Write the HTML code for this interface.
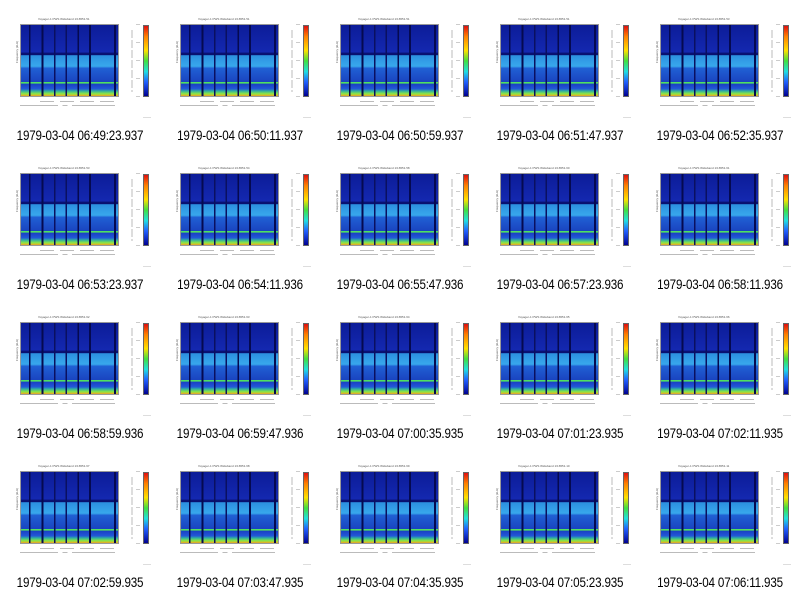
<!DOCTYPE html>
<html><head><meta charset="utf-8"><style>
*{margin:0;padding:0;box-sizing:border-box}
body{width:800px;height:596px;background:#fff;position:relative;overflow:hidden;font-family:"Liberation Sans",sans-serif}
.c{position:absolute;width:160px;height:149px}
.t{position:absolute;left:38px;top:17px;font-size:3px;color:#555;white-space:nowrap}
.p{position:absolute;left:20px;top:24px;width:99px;height:73px;
background:
linear-gradient(to right,transparent 8%,#050a50 8%,#050a50 10%,transparent 10%,transparent 21%,#050a50 21%,#050a50 23%,transparent 23%,transparent 34%,#0a1060 34%,#0a1060 35.5%,transparent 35.5%,transparent 46%,#0a1060 46%,#0a1060 47.5%,transparent 47.5%,transparent 58%,#050a50 58%,#050a50 60%,transparent 60%,transparent 70%,#050a50 70%,#050a50 72%,transparent 72%,transparent 96%,#050a50 96%,#050a50 98%,transparent 98%),
linear-gradient(to bottom,#0c1c98 0%,#1428b0 38%,#081070 40%,#081070 42%,#2c90e0 43%,#38a8ec 58%,#2060d4 61%,#1a44c0 80%,#50e060 80.5%,#50e060 82%,#1a40c4 83%,#2258d8 90%,#30b0a0 93%,#90e840 97%,#f0a020 100%);
border:1px solid #999}
.y{position:absolute;left:6px;top:50px;font-size:3px;color:#555;transform:rotate(-90deg)}
.x{position:absolute;left:20px;top:99px;width:99px;height:10px}
.x:before{content:"";position:absolute;left:20px;top:2px;width:75px;height:1px;background:repeating-linear-gradient(to right,#bbb 0 14px,transparent 14px 20px)}
.x:after{content:"";position:absolute;left:0;top:6px;width:95px;height:1px;background:linear-gradient(to right,#bbb 0 40%,transparent 40% 45%,#bbb 45% 50%,transparent 50% 55%,#bbb 55% 100%)}
.cb{position:absolute;left:143px;top:25px;width:6px;height:72px;border:1px solid #666;
background:linear-gradient(to bottom,#e01010,#ff8000 15%,#ffe000 35%,#40e040 50%,#20e0e0 65%,#2060ff 80%,#000090)}
.cbl{position:absolute;left:131px;top:30px;width:2px;height:62px;background:repeating-linear-gradient(to bottom,#ddd 0 8px,transparent 8px 10px)}
.k{position:absolute;left:136px;top:24px;width:4px;height:75px;background:repeating-linear-gradient(to bottom,#ccc 0 1px,transparent 1px 18px)}
.sm{position:absolute;left:143px;top:117px;width:8px;height:1px;background:#ddd}
.l{position:absolute;left:0;width:160px;top:127px;text-align:center;font-size:14px;color:#000;transform:scaleX(0.83);letter-spacing:-0.2px}
</style></head><body>
<div class="c" style="left:0;top:0"><div class="t">Voyager-1 PWS Wideband 1/16551.51</div><div class="y">Frequency (kHz)</div><div class="p"></div><div class="x"></div><div class="cbl"></div><div class="k"></div><div class="cb"></div><div class="sm"></div><div class="l">1979-03-04 06:49:23.937</div></div>
<div class="c" style="left:160px;top:0"><div class="t">Voyager-1 PWS Wideband 1/16551.51</div><div class="y">Frequency (kHz)</div><div class="p"></div><div class="x"></div><div class="cbl"></div><div class="k"></div><div class="cb"></div><div class="sm"></div><div class="l">1979-03-04 06:50:11.937</div></div>
<div class="c" style="left:320px;top:0"><div class="t">Voyager-1 PWS Wideband 1/16551.51</div><div class="y">Frequency (kHz)</div><div class="p"></div><div class="x"></div><div class="cbl"></div><div class="k"></div><div class="cb"></div><div class="sm"></div><div class="l">1979-03-04 06:50:59.937</div></div>
<div class="c" style="left:480px;top:0"><div class="t">Voyager-1 PWS Wideband 1/16551.51</div><div class="y">Frequency (kHz)</div><div class="p"></div><div class="x"></div><div class="cbl"></div><div class="k"></div><div class="cb"></div><div class="sm"></div><div class="l">1979-03-04 06:51:47.937</div></div>
<div class="c" style="left:640px;top:0"><div class="t">Voyager-1 PWS Wideband 1/16551.53</div><div class="y">Frequency (kHz)</div><div class="p"></div><div class="x"></div><div class="cbl"></div><div class="k"></div><div class="cb"></div><div class="sm"></div><div class="l">1979-03-04 06:52:35.937</div></div>

<div class="c" style="left:0;top:149px"><div class="t">Voyager-1 PWS Wideband 1/16551.53</div><div class="y">Frequency (kHz)</div><div class="p"></div><div class="x"></div><div class="cbl"></div><div class="k"></div><div class="cb"></div><div class="sm"></div><div class="l">1979-03-04 06:53:23.937</div></div>
<div class="c" style="left:160px;top:149px"><div class="t">Voyager-1 PWS Wideband 1/16551.54</div><div class="y">Frequency (kHz)</div><div class="p"></div><div class="x"></div><div class="cbl"></div><div class="k"></div><div class="cb"></div><div class="sm"></div><div class="l">1979-03-04 06:54:11.936</div></div>
<div class="c" style="left:320px;top:149px"><div class="t">Voyager-1 PWS Wideband 1/16551.58</div><div class="y">Frequency (kHz)</div><div class="p"></div><div class="x"></div><div class="cbl"></div><div class="k"></div><div class="cb"></div><div class="sm"></div><div class="l">1979-03-04 06:55:47.936</div></div>
<div class="c" style="left:480px;top:149px"><div class="t">Voyager-1 PWS Wideband 1/16551.60</div><div class="y">Frequency (kHz)</div><div class="p"></div><div class="x"></div><div class="cbl"></div><div class="k"></div><div class="cb"></div><div class="sm"></div><div class="l">1979-03-04 06:57:23.936</div></div>
<div class="c" style="left:640px;top:149px"><div class="t">Voyager-1 PWS Wideband 1/16551.61</div><div class="y">Frequency (kHz)</div><div class="p"></div><div class="x"></div><div class="cbl"></div><div class="k"></div><div class="cb"></div><div class="sm"></div><div class="l">1979-03-04 06:58:11.936</div></div>

<div class="c" style="left:0;top:298px"><div class="t">Voyager-1 PWS Wideband 1/16551.62</div><div class="y">Frequency (kHz)</div><div class="p"></div><div class="x"></div><div class="cbl"></div><div class="k"></div><div class="cb"></div><div class="sm"></div><div class="l">1979-03-04 06:58:59.936</div></div>
<div class="c" style="left:160px;top:298px"><div class="t">Voyager-1 PWS Wideband 1/16551.63</div><div class="y">Frequency (kHz)</div><div class="p"></div><div class="x"></div><div class="cbl"></div><div class="k"></div><div class="cb"></div><div class="sm"></div><div class="l">1979-03-04 06:59:47.936</div></div>
<div class="c" style="left:320px;top:298px"><div class="t">Voyager-1 PWS Wideband 1/16551.64</div><div class="y">Frequency (kHz)</div><div class="p"></div><div class="x"></div><div class="cbl"></div><div class="k"></div><div class="cb"></div><div class="sm"></div><div class="l">1979-03-04 07:00:35.935</div></div>
<div class="c" style="left:480px;top:298px"><div class="t">Voyager-1 PWS Wideband 1/16551.65</div><div class="y">Frequency (kHz)</div><div class="p"></div><div class="x"></div><div class="cbl"></div><div class="k"></div><div class="cb"></div><div class="sm"></div><div class="l">1979-03-04 07:01:23.935</div></div>
<div class="c" style="left:640px;top:298px"><div class="t">Voyager-1 PWS Wideband 1/16551.66</div><div class="y">Frequency (kHz)</div><div class="p"></div><div class="x"></div><div class="cbl"></div><div class="k"></div><div class="cb"></div><div class="sm"></div><div class="l">1979-03-04 07:02:11.935</div></div>

<div class="c" style="left:0;top:447px"><div class="t">Voyager-1 PWS Wideband 1/16551.67</div><div class="y">Frequency (kHz)</div><div class="p"></div><div class="x"></div><div class="cbl"></div><div class="k"></div><div class="cb"></div><div class="sm"></div><div class="l">1979-03-04 07:02:59.935</div></div>
<div class="c" style="left:160px;top:447px"><div class="t">Voyager-1 PWS Wideband 1/16551.68</div><div class="y">Frequency (kHz)</div><div class="p"></div><div class="x"></div><div class="cbl"></div><div class="k"></div><div class="cb"></div><div class="sm"></div><div class="l">1979-03-04 07:03:47.935</div></div>
<div class="c" style="left:320px;top:447px"><div class="t">Voyager-1 PWS Wideband 1/16551.69</div><div class="y">Frequency (kHz)</div><div class="p"></div><div class="x"></div><div class="cbl"></div><div class="k"></div><div class="cb"></div><div class="sm"></div><div class="l">1979-03-04 07:04:35.935</div></div>
<div class="c" style="left:480px;top:447px"><div class="t">Voyager-1 PWS Wideband 1/16551.10</div><div class="y">Frequency (kHz)</div><div class="p"></div><div class="x"></div><div class="cbl"></div><div class="k"></div><div class="cb"></div><div class="sm"></div><div class="l">1979-03-04 07:05:23.935</div></div>
<div class="c" style="left:640px;top:447px"><div class="t">Voyager-1 PWS Wideband 1/16551.11</div><div class="y">Frequency (kHz)</div><div class="p"></div><div class="x"></div><div class="cbl"></div><div class="k"></div><div class="cb"></div><div class="sm"></div><div class="l">1979-03-04 07:06:11.935</div></div>
</body></html>
